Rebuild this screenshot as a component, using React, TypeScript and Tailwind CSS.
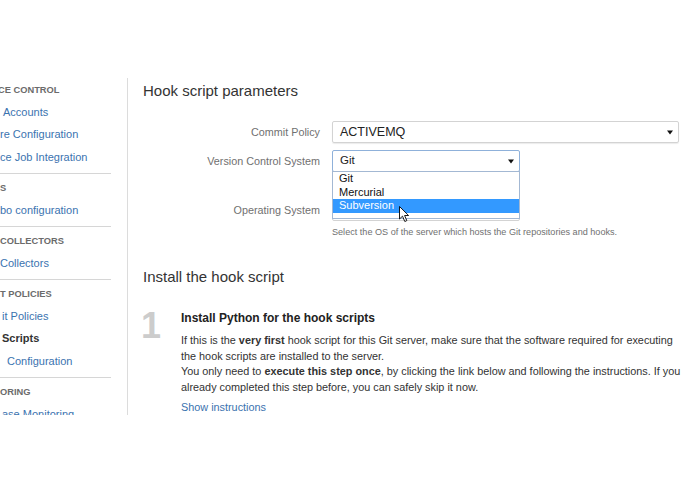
import React from "react";

const font = { fontFamily: '"Liberation Sans", Arial, sans-serif' };

function Arrow() {
  return (
    <svg width="6" height="5" viewBox="0 0 6 5" className="shrink-0">
      <path d="M0 0.5 L6 0.5 L3 4.5 Z" fill="#111" />
    </svg>
  );
}

function Cursor() {
  return (
    <svg width="12" height="17" viewBox="0 0 12 17" className="absolute left-[66px] top-[34px]">
      <path
        d="M0.5 0.5 L0.5 13 L3.5 10.2 L5.8 15.5 L7.8 14.6 L5.6 9.5 L9.6 9.5 Z"
        fill="#fff"
        stroke="#000"
        strokeWidth="0.9"
        strokeLinejoin="round"
      />
    </svg>
  );
}

type Item = { t: string; kind: "h" | "a" | "cur" | "div"; pl?: string };

const side: Item[] = [
  { t: "CE CONTROL", kind: "h", pl: "-ml-[2px]" },
  { t: "Accounts", kind: "a", pl: "pl-[3px]" },
  { t: "re Configuration", kind: "a" },
  { t: "ce Job Integration", kind: "a" },
  { t: "", kind: "div" },
  { t: "S", kind: "h" },
  { t: "bo configuration", kind: "a" },
  { t: "", kind: "div" },
  { t: "COLLECTORS", kind: "h" },
  { t: "Collectors", kind: "a" },
  { t: "", kind: "div" },
  { t: "T POLICIES", kind: "h" },
  { t: "it Policies", kind: "a", pl: "pl-[2px]" },
  { t: "Scripts", kind: "cur", pl: "pl-[2px]" },
  { t: "Configuration", kind: "a", pl: "pl-[7px]" },
  { t: "", kind: "div" },
  { t: "ORING", kind: "h" },
  { t: "ase Monitoring", kind: "a", pl: "pl-[2px]" },
];

export default function App() {
  return (
    <div className="w-[695px] h-[494px] bg-white pt-[78px] overflow-hidden" style={font}>
      <div className="h-[337px] overflow-hidden flex">
        {/* sidebar */}
        <aside className="w-[128px] shrink-0 border-r border-[#dcdcdc] pr-[16px] pt-[1px] overflow-hidden">
          {side.map((it, i) => {
            if (it.kind === "div")
              return (
                <div key={i} className="h-[8px] flex items-center">
                  <div className="h-px w-full bg-[#d6d6d6]" />
                </div>
              );
            if (it.kind === "h")
              return (
                <div
                  key={i}
                  className={`h-[22.5px] pt-[2px] flex items-center whitespace-nowrap text-[9.3px] font-bold text-[#6b6b6b] ${it.pl ?? ""}`}
                >
                  {it.t}
                </div>
              );
            if (it.kind === "cur")
              return (
                <div
                  key={i}
                  className={`h-[22.5px] pb-[2px] flex items-center whitespace-nowrap text-[11px] font-bold text-[#333] ${it.pl ?? ""}`}
                >
                  {it.t}
                </div>
              );
            return (
              <div
                key={i}
                className={`h-[22.5px] pb-[2px] flex items-center whitespace-nowrap text-[11px] text-[#3b73af] ${it.pl ?? ""}`}
              >
                {it.t}
              </div>
            );
          })}
        </aside>

        {/* main */}
        <main className="flex-1 pl-[15px] pr-[10px] pt-[3px] text-[#333]">
          <h2 className="text-[15px] leading-[20px] text-[#333]">Hook script parameters</h2>

          {/* form */}
          <div className="mt-[20px]">
            <div className="flex items-center h-[22px]">
              <div className="w-[177px] text-right text-[10.8px] text-[#707070]">Commit Policy</div>
              <div className="ml-[12px] w-[347px] h-[22px] border border-[#d3d3d3] rounded-[2px] shadow-[0_1px_1px_rgba(0,0,0,0.08)] flex items-center justify-between pl-[7px] pr-[5px] text-[12.5px] text-[#222]">
                <span>ACTIVEMQ</span>
                <Arrow />
              </div>
            </div>

            <div className="flex items-center h-[22px] mt-[7px]">
              <div className="w-[177px] text-right text-[10.8px] text-[#707070]">Version Control System</div>
              <div className="ml-[12px] w-[188px] h-[22px] relative z-10">
                <div className="w-full h-full border border-[#8fb1da] rounded-[2px] flex items-center justify-between pl-[7px] pr-[5px] text-[11.5px] text-[#222] bg-white">
                  <span>Git</span>
                  <Arrow />
                </div>
                {/* dropdown list */}
                <div className="absolute left-0 top-[21px] w-[188px] h-[48px] bg-white border border-[#a3b8d3] text-[11px] text-[#111]">
                  <div className="h-[13.5px] leading-[13.5px] pl-[6px]">Git</div>
                  <div className="h-[13.5px] leading-[13.5px] pl-[6px]">Mercurial</div>
                  <div className="h-[13.5px] leading-[13.5px] pl-[6px] bg-[#3399ff] text-white">Subversion</div>
                  <Cursor />
                </div>
              </div>
            </div>

            <div className="flex items-center h-[22px] mt-[27px]">
              <div className="w-[177px] text-right text-[10.8px] text-[#707070]">Operating System</div>
              <div className="ml-[12px] w-[188px] h-[22px] border border-[#d3d3d3] rounded-[2px] bg-white" />
            </div>

            <p className="ml-[189px] mt-[5px] text-[9.1px] leading-[12px] text-[#707070] whitespace-nowrap">
              Select the OS of the server which hosts the Git repositories and hooks.
            </p>
          </div>

          <h2 className="mt-[29px] text-[15px] leading-[20px] text-[#333]">Install the hook script</h2>

          <div className="flex mt-[21px]">
            <div className="w-[40px] shrink-0 -ml-[2px] text-[36px] leading-[36px] font-bold text-[#cccccc]">1</div>
            <div className="w-[502px] pt-[2px]">
              <h3 className="text-[12px] leading-[16px] font-bold text-[#222]">Install Python for the hook scripts</h3>
              <p className="mt-[7px] text-[10.85px] leading-[15.5px] text-[#333]">
                If this is the <b>very first</b> hook script for this Git server, make sure that the software required for executing
                the hook scripts are installed to the server.
                <br />
                You only need to <b>execute this step once</b>, by clicking the link below and following the instructions. If you
                already completed this step before, you can safely skip it now.
              </p>
              <a className="block mt-[4.5px] text-[10.85px] leading-[15.5px] text-[#3b73af]">Show instructions</a>
            </div>
          </div>
        </main>
      </div>
    </div>
  );
}
